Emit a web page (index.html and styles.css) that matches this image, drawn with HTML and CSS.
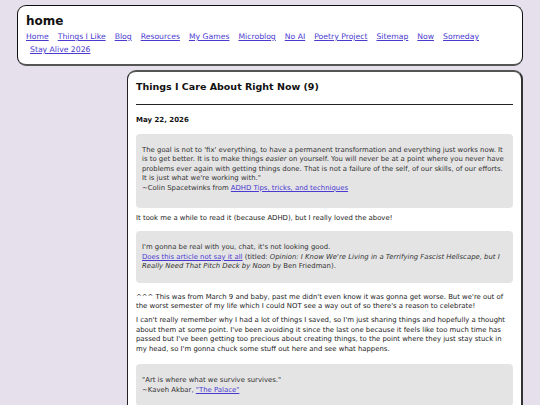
FILE: index.html
```html
<!DOCTYPE html>
<html lang="en">
<head>
<meta charset="utf-8">
<title>home</title>
<link rel="stylesheet" href="styles.css">
</head>
<body>
<header class="site-header">
  <h1 class="site-title">home</h1>
  <nav class="site-nav">
    <a href="#">Home</a>
    <a href="#">Things I Like</a>
    <a href="#">Blog</a>
    <a href="#">Resources</a>
    <a href="#">My Games</a>
    <a href="#">Microblog</a>
    <a href="#">No AI</a>
    <a href="#">Poetry Project</a>
    <a href="#">Sitemap</a>
    <a href="#">Now</a>
    <a href="#">Someday</a>
    <a href="#" class="nav-wrap">Stay Alive 2026</a>
  </nav>
</header>
<div class="layout">
  <aside class="sidebar"></aside>
  <main class="post">
    <h2 class="post-title">Things I Care About Right Now (9)</h2>
    <hr class="rule">
    <h3 class="post-date">May 22, 2026</h3>
    <blockquote class="quote quote-first">
      <p>The goal is not to 'fix' everything, to have a permanent transformation and everything just works now. It is to get better. It is to make things <em>easier</em> on yourself. You will never be at a point where you never have problems ever again with getting things done. That is not a failure of the self, of our skills, of our efforts. It is just what we're working with."<br>~Colin Spacetwinks from <a href="#">ADHD Tips, tricks, and techniques</a></p>
    </blockquote>
    <p class="after-quote">It took me a while to read it (because ADHD), but I really loved the above!</p>
    <blockquote class="quote quote-second">
      <p>I'm gonna be real with you, chat, it's not looking good.<br><a href="#">Does this article not say it all</a> (titled: <em>Opinion: I Know We're Living in a Terrifying Fascist Hellscape, but I Really Need That Pitch Deck by Noon</em> by Ben Friedman).</p>
    </blockquote>
    <p class="after-quote-wide">^^^ This was from March 9 and baby, past me didn't even know it was gonna get worse. But we're out of the worst semester of my life which I could NOT see a way out of so there's a reason to celebrate!</p>
    <p>I can't really remember why I had a lot of things I saved, so I'm just sharing things and hopefully a thought about them at some point. I've been avoiding it since the last one because it feels like too much time has passed but I've been getting too precious about creating things, to the point where they just stay stuck in my head, so I'm gonna chuck some stuff out here and see what happens.</p>
    <blockquote class="quote quote-third">
      <p>"Art is where what we survive survives."<br>~Kaveh Akbar, <a href="#">"The Palace"</a></p>
    </blockquote>
  </main>
</div>
</body>
</html>
```

FILE: styles.css
```css
html, body {
  margin: 0;
  padding: 0;
}
body {
  background: #e6e0ec;
  font-family: "DejaVu Sans", Verdana, sans-serif;
  color: #222;
  padding: 5px 17px 0 17px;
}
a {
  color: #4a3ad0;
}
.site-header {
  background: #fff;
  border: 1px solid #111;
  border-bottom: 2px solid #555;
  border-radius: 9px;
  padding: 8px 8px 8px 8px;
}
.site-title {
  margin: 0;
  font-size: 12px;
  line-height: 14px;
  font-weight: bold;
  color: #111;
}
.site-nav {
  display: flex;
  flex-wrap: wrap;
  column-gap: 9px;
  margin-top: 2px;
  font-size: 7.7px;
  line-height: 13px;
}
.nav-wrap {
  margin-left: 4px;
}
.layout {
  display: flex;
  gap: 9px;
  margin-top: 4px;
}
.sidebar {
  width: 101px;
  flex: none;
}
.post {
  flex: 1;
  background: #fff;
  border: 1px solid #222;
  border-top: 2px solid #555;
  border-right: 2px solid #333;
  border-radius: 9px 9px 0 0;
  padding: 8px 8px 0 8px;
  font-size: 6.9px;
  line-height: 9.4px;
  min-height: 400px;
}
.post-title {
  margin: 0;
  font-size: 9.5px;
  line-height: 14px;
  color: #111;
}
.rule {
  border: 0;
  border-top: 1px solid #222;
  margin: 10px 0 0 0;
}
.post-date {
  font-size: 7px;
  line-height: 10px;
  margin: 10px 0 0 0;
  color: #111;
}
.quote {
  margin: 8px 0 0 0;
  background: #e4e4e4;
  border-radius: 4px;
  padding: 12px 6px 11px 6px;
  color: #333;
}
.quote-first {
  margin-top: 9px;
  padding-bottom: 15px;
}
.quote-second {
  margin-top: 8px;
}
.quote-third {
  margin-top: 10px;
}
.quote p {
  margin: 0;
}
.post > p {
  margin: 5px 0 0 0;
}
.post > p.after-quote {
  margin-top: 6px;
}
.post > p.after-quote-wide {
  margin-top: 10px;
}
```
